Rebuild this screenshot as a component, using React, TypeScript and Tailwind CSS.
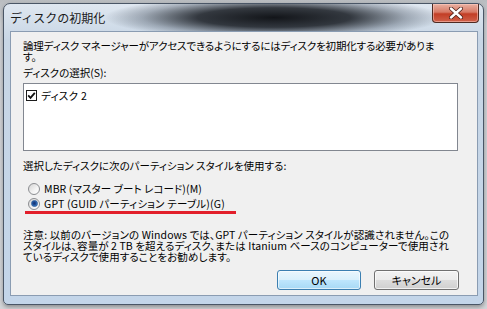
import React from "react";

function Radio({ checked }: { checked?: boolean }) {
  return (
    <div className="w-[12px] h-[12px] rounded-full border border-[#8b8d91] bg-[linear-gradient(135deg,#d4d4d4_0%,#f4f4f4_60%,#ffffff_100%)] flex items-center justify-center shrink-0">
      {checked && (
        <div className="w-[7px] h-[7px] rounded-full bg-[radial-gradient(circle_at_45%_45%,#16306a_0%,#1f4f9a_45%,#5aa6ea_100%)] border border-[#2a5c9c]" />
      )}
    </div>
  );
}

export default function App() {
  return (
    <div className="w-[487px] h-[309px] overflow-hidden bg-[linear-gradient(180deg,#b9bcc0_0%,#cfd2d6_8%,#d3d5d8_100%)] pt-[3px] px-[3px] font-['Noto_Sans_CJK_JP',sans-serif] text-black">
      <div className="h-[302px] rounded-t-[7px] rounded-b-[5px] border border-[#4a5666] bg-[linear-gradient(180deg,#dfe7f0_0%,#c8d6e5_12%,#c3d5e9_100%)] shadow-[0_2px_4px_rgba(0,0,0,0.35)] flex flex-col">
        {/* title bar */}
        <div className="relative h-[27px] flex items-start justify-between">
          <div className="absolute left-[100px] top-0 w-[340px] h-[27px] bg-[radial-gradient(ellipse_50%_80%_at_50%_50%,rgba(8,10,14,0.95)_0%,rgba(10,14,20,0.8)_45%,rgba(30,40,55,0.3)_78%,rgba(0,0,0,0)_100%)]" />
          <div className="relative pl-[6px] pt-[7px] text-[12px] leading-[14px] text-[#1a1a1a] whitespace-nowrap">
            ディスクの初期化
          </div>
          <div className="relative mr-[4px] w-[47px] h-[19px] rounded-b-[4px] border border-t-0 border-[#4e2a22] bg-[linear-gradient(180deg,#e9b1a2_0%,#d77a66_45%,#c23e26_55%,#d0614a_100%)] shadow-[inset_0_0_0_1px_rgba(255,210,200,0.5)] flex items-center justify-center">
            <svg width="14" height="12" viewBox="0 0 14 12">
              <path d="M2 1.5 L12 10.5 M12 1.5 L2 10.5" stroke="#4a1f18" strokeWidth="4" strokeLinecap="round" />
              <path d="M2 1.5 L12 10.5 M12 1.5 L2 10.5" stroke="#ffffff" strokeWidth="2.4" strokeLinecap="round" />
            </svg>
          </div>
        </div>

        {/* client area */}
        <div className="flex-1 ml-[6px] mr-[5px] mb-[8px] border border-[#8a9cb2] bg-[#f0f0f0] pl-[12px] pr-[18px] pt-[8px] flex flex-col text-[10.5px] leading-[11px] [font-feature-settings:'palt'] whitespace-nowrap">
          <div className="tracking-[-0.15px]">
            論理ディスク マネージャーがアクセスできるようにするにはディスクを初期化する必要がありま
            <br />
            す。
          </div>
          <div className="mt-[5px]">ディスクの選択(S):</div>
          <div className="mt-[5px] h-[68px] w-[435px] border border-[#828790] bg-white pl-[2px] pt-[6px]">
            <div className="flex items-center gap-[4px]">
              <div className="w-[11px] h-[11px] border border-[#1c1c1c] bg-white flex items-center justify-center">
                <svg width="9" height="9" viewBox="0 0 9 9">
                  <path d="M1.2 4.4 L3.5 6.8 L7.8 1.8" stroke="#111" strokeWidth="1.8" fill="none" />
                </svg>
              </div>
              <span className="tracking-[0.3px]">ディスク 2</span>
            </div>
          </div>
          <div className="mt-[9px]">選択したディスクに次のパーティション スタイルを使用する:</div>
          <div className="mt-[10px] h-[15px] flex items-center gap-[4px] pl-[5px]">
            <Radio />
            <span className="tracking-[0.1px]">MBR (マスター ブート レコード)(M)</span>
          </div>
          <div className="h-[15px] flex items-center gap-[4px] pl-[5px]">
            <Radio checked />
            <span className="tracking-[0.2px]">GPT (GUID パーティション テーブル)(G)</span>
          </div>
          <div className="ml-[2px] w-[211px] h-[3px] bg-[#e21f2b]" />
          <div className="mt-[15px] tracking-[0.1px]">
            注意: 以前のバージョンの Windows では、GPT パーティション スタイルが認識されません。この
            <br />
            スタイルは、容量が 2 TB を超えるディスク、または Itanium ベースのコンピューターで使用され
            <br />
            ているディスクで使用することをお勧めします。
          </div>
          <div className="mt-[8px] flex justify-end gap-[13px]">
            <button className="w-[84px] h-[20px] rounded-[3px] border border-[#3c7fb1] bg-[linear-gradient(180deg,#eaf6fd_0%,#d9f0fc_50%,#bee6fd_51%,#a7d9f5_100%)] shadow-[inset_0_0_0_1px_rgba(255,255,255,0.6)] text-[11px] leading-[11px] text-black">
              OK
            </button>
            <button className="w-[85px] h-[20px] rounded-[3px] border border-[#707070] bg-[linear-gradient(180deg,#f2f2f2_0%,#ebebeb_50%,#dddddd_51%,#cfcfcf_100%)] shadow-[inset_0_0_0_1px_rgba(255,255,255,0.7)] text-[11px] leading-[11px] text-black">
              キャンセル
            </button>
          </div>
        </div>
      </div>
    </div>
  );
}
